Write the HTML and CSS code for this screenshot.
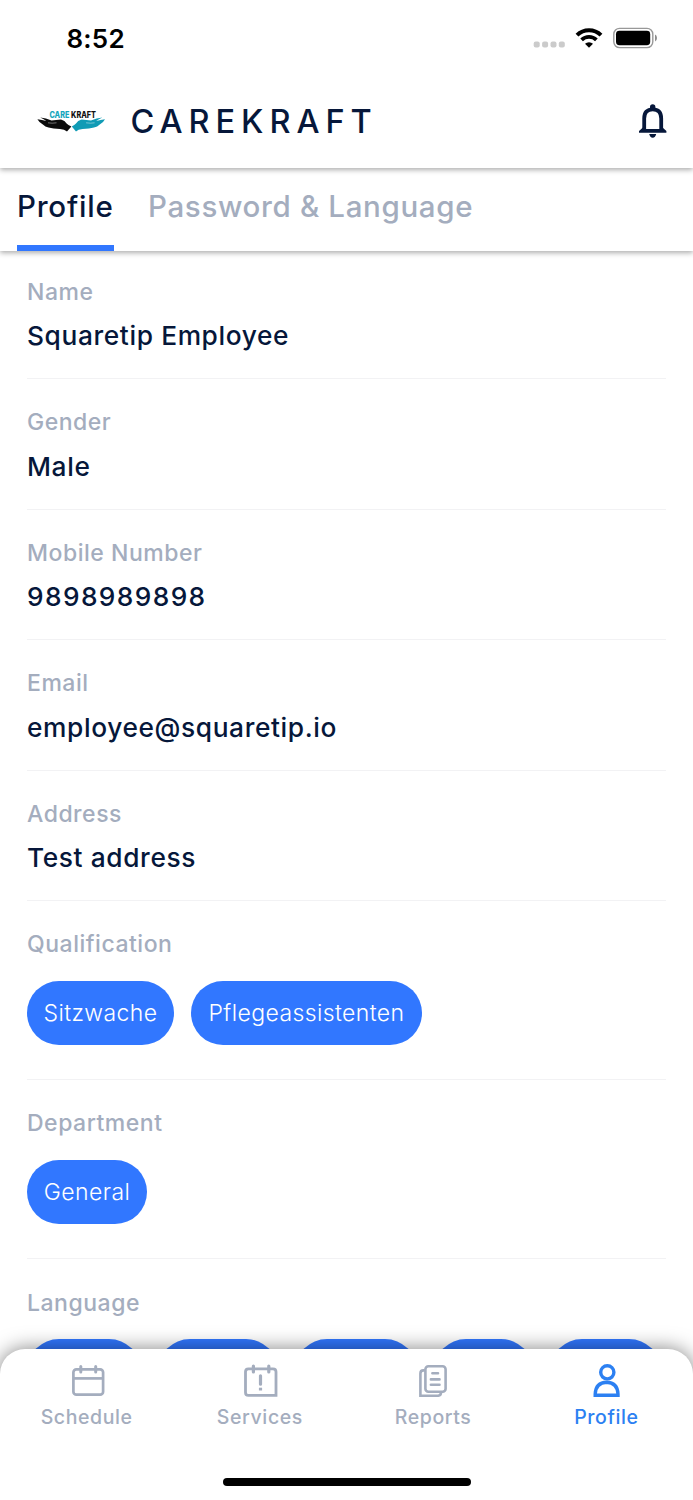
FILE: index.html
```html
<!DOCTYPE html>
<html lang="en">
<head>
<meta charset="utf-8">
<title>Carekraft – Profile</title>
<link rel="stylesheet" href="styles.css">
</head>
<body>
<div class="screen">
  <div class="status-bar">
    <span class="clock">8:52</span>
    <div class="status-icons">
      <svg class="signal" width="32" height="7" viewBox="0 0 32 7" fill="#cbcbcb"><rect x="0.7" y="0.4" width="6" height="6" rx="2"/><rect x="9.1" y="0.4" width="6" height="6" rx="2"/><rect x="17.5" y="0.4" width="6" height="6" rx="2"/><rect x="25.8" y="0.4" width="6" height="6" rx="2"/></svg>
      <svg class="wifi" width="28" height="22" viewBox="0 0 28 22" fill="none" stroke="#000"><path d="M2 8.2 A17 17 0 0 1 26 8.2" stroke-width="4"/><path d="M6.6 12.8 A10.6 10.6 0 0 1 21.4 12.8" stroke-width="3.8"/><path d="M14 20.8 L10 16.8 A5.7 5.7 0 0 1 18 16.8 Z" fill="#000" stroke="none"/></svg>
      <svg class="battery" width="45" height="22" viewBox="0 0 45 22"><rect x="0.8" y="1.4" width="39" height="19.2" rx="5.8" fill="none" stroke="#989898" stroke-width="1.4"/><rect x="3" y="3.8" width="34.2" height="14.4" rx="3.4"/><path d="M42 7.6 Q44 8.4 44 11 T42 14.4Z" fill="#8d8d8d"/></svg>
    </div>
  </div>
  <header class="app-header">
    <svg class="logo" width="70" height="24" viewBox="0 0 70 24">
      <text class="logo-text" x="12.4" y="8" textLength="20" lengthAdjust="spacingAndGlyphs" fill="#13a5bd">CARE</text>
      <text class="logo-text" x="34" y="8" textLength="25" lengthAdjust="spacingAndGlyphs" fill="#111">KRAFT</text>
      <path d="M0.4 9.2 Q5 10 9.4 11 Q7 9.4 3.2 7.6 Q9 8 14.5 10.4 Q19 10.4 24 9.6 Q28 10.6 29.6 13.4 Q31 15 34.4 16.4 L30 21.6 Q27.5 19.4 23 19 Q16 18.8 11.5 17.6 Q8 17 6.2 14.8 Q1.8 12 0.4 9.2Z" fill="#0b0b0b"/>
      <path d="M68 9.2 Q63.6 10 59.2 11 Q61.6 9.4 65.4 7.6 Q59.6 8 54 10.4 Q49.6 10.4 44.6 9.6 Q40.6 10.6 39 13.4 Q37.6 15 34.8 16.4 L39 21.6 Q41 19.4 45.6 19 Q52.6 18.8 57 17.6 Q60.6 17 62.4 14.8 Q66.8 12 68 9.2Z" fill="#109bb5"/>
      <path d="M11 12.8 Q15 13.6 19.5 12.8 M57.6 12.8 Q53.6 13.6 49.1 12.8" fill="none" stroke="#fff" stroke-opacity=".7" stroke-width=".6"/>
    </svg>
    <h1 class="brand">CAREKRAFT</h1>
    <svg class="bell" width="36" height="36" viewBox="0 0 36 36" fill="none" stroke="#06173a" stroke-width="3.8"><path d="M9.2 26.5V15.5Q9.2 6.3 17.7 6.3T26.2 15.5V26.5"/><path d="M15 6.2V4Q15 1.3 17.7 1.3T20.4 4V6.2ZM9 23.5L4 28V29.8H31.4V28L26.4 23.5V26H9ZM14.2 31.1H21.2Q20.4 34.7 17.7 34.7T14.2 31.1Z" fill="#06173a" stroke="none"/></svg>
  </header>
  <nav class="tabs">
    <span class="tab tab-active">Profile</span>
    <span class="tab">Password &amp; Language</span>
  </nav>
  <main class="details">
    <section class="field"><div class="label">Name</div><div class="value">Squaretip Employee</div></section>
    <section class="field"><div class="label">Gender</div><div class="value">Male</div></section>
    <section class="field"><div class="label">Mobile Number</div><div class="value value-number">9898989898</div></section>
    <section class="field"><div class="label">Email</div><div class="value">employee@squaretip.io</div></section>
    <section class="field"><div class="label">Address</div><div class="value">Test address</div></section>
    <section class="field field-chips"><div class="label">Qualification</div><div class="chips"><span class="chip chip-w147">Sitzwache</span><span class="chip chip-w231">Pflegeassistenten</span></div></section>
    <section class="field field-chips"><div class="label">Department</div><div class="chips"><span class="chip chip-w120">General</span></div></section>
    <section class="field field-chips"><div class="label">Language</div><div class="chips"><span class="chip chip-w114"></span><span class="chip chip-w120"></span><span class="chip chip-w122"></span><span class="chip chip-w99"></span><span class="chip chip-w111"></span></div></section>
  </main>
  <nav class="bottom-nav">
    <div class="nav-items">
      <div class="nav-item">
        <svg width="36" height="36" viewBox="0 0 36 36" fill="none" stroke="currentColor" stroke-width="2.7"><rect x="4.4" y="6.3" width="29.7" height="25.4" rx="3"/><path d="M4.4 15.4H34"/><path d="M11.8 3.4V9M26.7 3.4V9" stroke-linecap="round" stroke-width="3"/></svg>
        <span>Schedule</span>
      </div>
      <div class="nav-item">
        <svg width="36" height="36" viewBox="0 0 36 36" fill="none" stroke="currentColor" stroke-width="2.8"><path d="M34 32.4H6.4Q3.5 32.4 3.5 29.5V8.8Q3.5 5.9 6.4 5.9H31Q34 5.9 34 8.8Z"/><path d="M11.4 3.1V9M26.8 3.1V9M18.5 12.8V21.2" stroke-linecap="round" stroke-width="3.2"/><path d="M16.9 26.1H20.1"/></svg>
        <span>Services</span>
      </div>
      <div class="nav-item">
        <svg width="36" height="36" viewBox="0 0 36 36" fill="none" stroke="currentColor" stroke-width="2.6"><rect x="10.4" y="3.2" width="20.2" height="25.5" rx="3"/><path d="M9.8 7.4H8.4Q5.4 7.4 5.4 10.4V32.7H23.3Q26 32.4 26 29.5"/><path d="M17.4 10.2H23M15.9 16.4H24.5M15.9 21.7H24.5" stroke-linecap="round"/></svg>
        <span>Reports</span>
      </div>
      <div class="nav-item nav-item-active">
        <svg width="36" height="36" viewBox="0 0 36 36" fill="none" stroke="currentColor" stroke-width="3.4"><circle cx="19.3" cy="9.3" r="6.6"/><path d="M7.2 32.3V31Q7.8 19.4 18.6 19.2Q29.4 19.4 30 31V32.3Z"/></svg>
        <span>Profile</span>
      </div>
    </div>
    <div class="home-indicator"></div>
  </nav>
</div>
</body>
</html>
```
FILE: styles.css
```css
* { box-sizing: border-box; }

body {
  margin: 0;
  font-family: Inter, "Liberation Sans", sans-serif;
  font-weight: 500;
  color: #06173a;
  background: #fff;
}

.screen {
  position: relative;
  display: flex;
  flex-direction: column;
  width: 693px;
  height: 1500px;
  overflow: hidden;
}

.status-bar {
  position: relative;
  z-index: 3;
  display: flex;
  justify-content: space-between;
  align-items: center;
  height: 76px;
  flex: none;
  padding: 0 35px 0 66.5px;
  color: #000;
  background: #fff;
}

.clock { font-size: 26px; font-weight: 600; letter-spacing: 0.2px; }

.status-icons { display: flex; align-items: center; }
.signal { margin: 13px 10px 0 0; }
.wifi { margin-right: 10px; }

.app-header {
  position: relative;
  z-index: 2;
  display: flex;
  align-items: center;
  height: 91.5px;
  flex: none;
  padding: 0 22px 1px 37px;
  background: #fff;
  box-shadow: 0 2px 5px rgba(0, 0, 0, 0.32);
}

.logo { margin: 2px 23.5px 0 0; }
.logo-text { font-size: 8.4px; font-weight: 800; }

.brand {
  margin: 1px 0 0;
  font-size: 32.5px;
  line-height: 40px;
  font-weight: 500;
  letter-spacing: 5.95px;
}

.bell { margin-left: auto; }

.tabs {
  position: relative;
  z-index: 1;
  display: flex;
  gap: 34px;
  height: 83.5px;
  flex: none;
  padding-left: 17px;
  background: #fff;
  box-shadow: 0 2px 5px rgba(0, 0, 0, 0.32);
}

.tab {
  padding-top: 18.5px;
  font-size: 29.5px;
  line-height: 40px;
  letter-spacing: 0.65px;
  white-space: nowrap;
  color: #a4adbe;
}

.tab-active {
  width: 97px;
  letter-spacing: 0.8px;
  color: #06173a;
  border-bottom: 6px solid #3177ff;
}

.details {
  flex: 1;
  min-height: 0;
  overflow: hidden;
  padding: 0 27px;
}

.field {
  height: 130.55px;
  padding-top: 28.2px;
  border-bottom: 1px solid #f2f2f4;
}

.field:first-child { height: 128px; padding-top: 25.5px; }
.field-chips { height: 179.1px; }

.label { font-size: 23px; line-height: 31px; letter-spacing: 0.52px; color: #a4adbe; }
.value { margin-top: 11.6px; font-size: 26.3px; line-height: 34px; letter-spacing: 0.62px; }
.value-number { letter-spacing: 1.4px; }

.chips { display: flex; gap: 17px; margin-top: 20.8px; }

.chip {
  display: flex;
  align-items: center;
  justify-content: center;
  height: 63.5px;
  border-radius: 32px;
  background: #3177ff;
  color: #fff;
  font-size: 23px;
  font-weight: 300;
  letter-spacing: 0.4px;
}

.chip-w99 { width: 99px; }
.chip-w111 { width: 111px; }
.chip-w114 { width: 114px; }
.chip-w120 { width: 120px; }
.chip-w122 { width: 122px; }
.chip-w147 { width: 147px; }
.chip-w231 { width: 231px; }

.bottom-nav {
  position: absolute;
  left: 0;
  right: 0;
  bottom: 0;
  z-index: 3;
  display: flex;
  flex-direction: column;
  justify-content: space-between;
  align-items: center;
  height: 151px;
  padding: 14px 0;
  border-radius: 25px 25px 0 0;
  background: #fff;
  box-shadow: 0 0 20px rgba(0, 0, 0, 0.5);
}

.nav-items { display: grid; grid-template-columns: repeat(4, 1fr); width: 100%; }

.nav-item {
  display: flex;
  flex-direction: column;
  align-items: center;
  gap: 6px;
  font-size: 19.5px;
  line-height: 24px;
  letter-spacing: 0.6px;
  color: #a4adbe;
}

.nav-item-active { color: #2c80f2; }

.home-indicator { width: 248px; height: 8px; border-radius: 4px; background: #000; }
```
